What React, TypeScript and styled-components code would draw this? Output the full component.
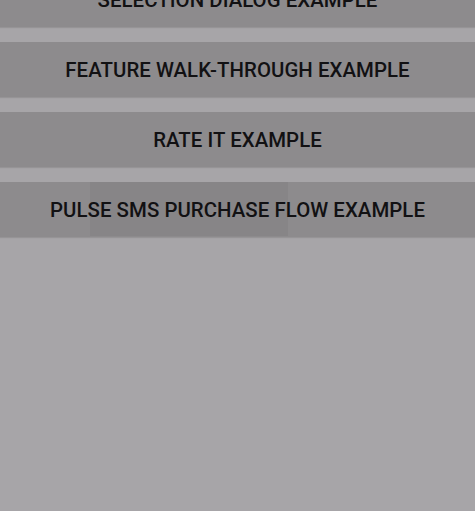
import React from "react";
import styled, { createGlobalStyle } from "styled-components";

const Global = createGlobalStyle`
  html, body { margin: 0; padding: 0; background: #a7a5a8; }
  body { font-family: Roboto, "Noto Sans", sans-serif; }
`;

const Screen = styled.div`
  width: 475px;
  height: 511px;
  overflow: hidden;
  background: #a7a5a8;
  display: flex;
  flex-direction: column;
`;

const List = styled.div`
  display: flex;
  flex-direction: column;
  gap: 16px;
  margin-top: -28px;
`;

const Button = styled.div`
  position: relative;
  overflow: hidden;
  height: 54px;
  box-sizing: border-box;
  padding-top: 2px;
  background: #8d8b8d;
  box-shadow: 0 2px 1px rgba(0, 0, 0, 0.1), 0 1px 0 rgba(0, 0, 0, 0.06);
  display: flex;
  align-items: center;
  justify-content: center;
  color: #121113;
  font-size: 20.4px;
  font-weight: 500;
  letter-spacing: 0.05px;
  text-transform: uppercase;
`;

const Label = styled.span`
  position: relative;
  z-index: 1;
`;

const Ripple = styled.div`
  position: absolute;
  top: 0;
  bottom: 0;
  left: 90px;
  width: 198px;
  background: rgba(0, 0, 0, 0.04);
`;

const items = [
  "Selection Dialog Example",
  "Feature Walk-through Example",
  "Rate It Example",
  "Pulse SMS Purchase Flow Example",
];

export default function App() {
  return (
    <Screen>
      <Global />
      <List>
        {items.map((t, i) => (
          <Button key={t}>
            {i === 3 && <Ripple />}
            <Label>{t}</Label>
          </Button>
        ))}
      </List>
    </Screen>
  );
}
